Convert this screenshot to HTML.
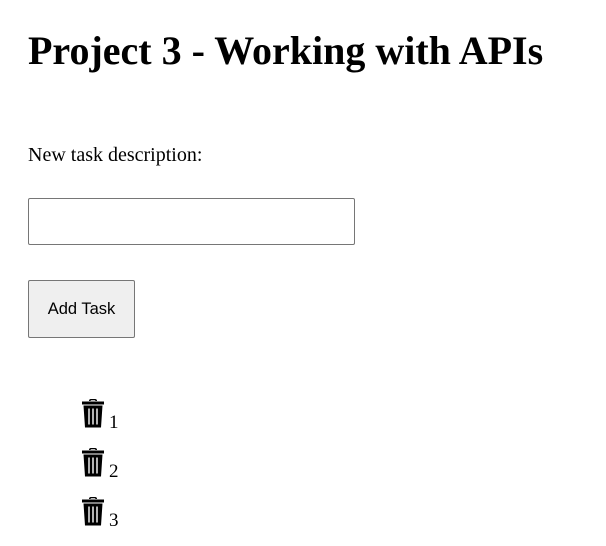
<!DOCTYPE html>
<html><head><style>
body{margin:0;width:606px;height:546px;background:#fff;font-family:"Liberation Serif",serif;color:#000;position:relative;overflow:hidden}
h1{position:absolute;left:28px;top:25px;margin:0;font-size:40px;font-weight:bold;line-height:52px;white-space:nowrap}
.lbl{position:absolute;left:28px;top:143px;font-size:20px;line-height:24px}
.inp{position:absolute;left:28px;top:198px;width:325px;height:45px;border:1px solid #767676;border-radius:2px}
.btn{position:absolute;left:28px;top:280px;width:105px;height:56px;border:1px solid #767676;border-radius:2px;background:#efefef;font-family:"Liberation Sans",sans-serif;font-size:16.5px;text-align:center;line-height:56px}
.it{position:absolute;left:81px;font-size:19px}
.it svg{position:absolute;left:0;top:0}
.it span{position:absolute;left:28px;top:13px;line-height:24px}
</style></head><body>
<h1>Project 3 - Working with APIs</h1>
<div class="lbl">New task description:</div>
<div class="inp"></div>
<div class="btn">Add Task</div>
<div class="it" style="top:398px"><svg width="24" height="31" viewBox="0 0 24 31"><path d="M8 3q0-2 2-2h4q2 0 2 2h-1.5q0-.8-.8-.8h-3.4q-.8 0-.8.8z M1 3.5h22v3H1z M2.5 7.5h19l-1.5 22h-16z" fill="#000"/><path d="M8 10.5v16M12 10.5v16M16 10.5v16" stroke="#fff" stroke-width="1.4"/></svg><span>1</span></div>
<div class="it" style="top:447px"><svg width="24" height="31" viewBox="0 0 24 31"><path d="M8 3q0-2 2-2h4q2 0 2 2h-1.5q0-.8-.8-.8h-3.4q-.8 0-.8.8z M1 3.5h22v3H1z M2.5 7.5h19l-1.5 22h-16z" fill="#000"/><path d="M8 10.5v16M12 10.5v16M16 10.5v16" stroke="#fff" stroke-width="1.4"/></svg><span>2</span></div>
<div class="it" style="top:496px"><svg width="24" height="31" viewBox="0 0 24 31"><path d="M8 3q0-2 2-2h4q2 0 2 2h-1.5q0-.8-.8-.8h-3.4q-.8 0-.8.8z M1 3.5h22v3H1z M2.5 7.5h19l-1.5 22h-16z" fill="#000"/><path d="M8 10.5v16M12 10.5v16M16 10.5v16" stroke="#fff" stroke-width="1.4"/></svg><span>3</span></div>
</body></html>
